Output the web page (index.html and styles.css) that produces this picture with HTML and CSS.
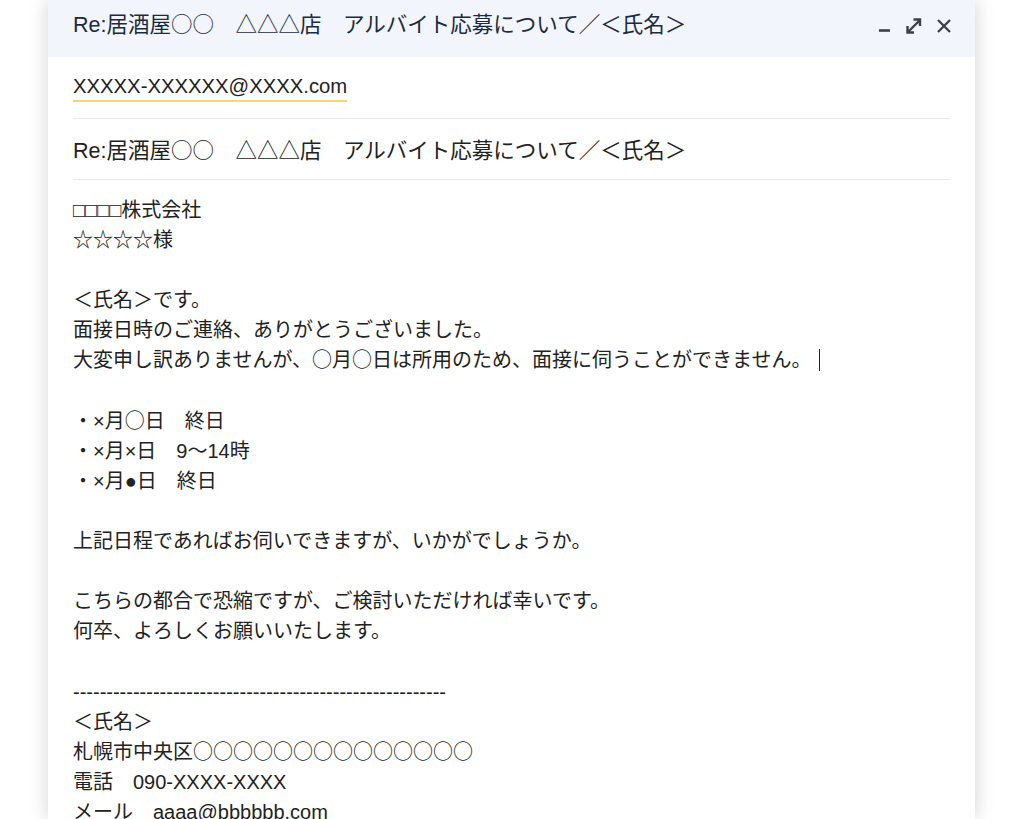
FILE: index.html
```html
<!DOCTYPE html>
<html lang="ja">
<head>
    <meta charset="UTF-8">
    <meta name="viewport" content="width=device-width, initial-scale=1.0">
    <title>Re:居酒屋〇〇　△△△店　アルバイト応募について／＜氏名＞</title>
    <link rel="stylesheet" href="styles.css">
</head>
<body>
    <div class="compose">
        <div class="titlebar">
            <div class="title">Re:居酒屋<span class="jp">○○</span>　<span class="jp">△△△</span>店　アルバイト応募について／＜氏名＞</div>
            <div class="controls">
                <svg width="14" height="14" viewBox="0 0 14 14"><path d="M1 11.5h11" stroke="#3c4043" stroke-width="2.6"/></svg>
                <svg width="20" height="18" viewBox="0 0 20 18"><path d="M3.5 15.5l12-12M3.5 9v6.5H10M9.5 2.5h6.5V9" stroke="#3c4043" stroke-width="2.4" fill="none"/></svg>
                <svg width="16" height="16" viewBox="0 0 16 16"><path d="M2 2l12 12M14 2L2 14" stroke="#3c4043" stroke-width="2.3"/></svg>
            </div>
        </div>

        <div class="field">
            <span class="recipient">XXXXX-XXXXXX@XXXX.com</span>
        </div>
        <div class="field subject">Re:居酒屋<span class="jp">○○</span>　<span class="jp">△△△</span>店　アルバイト応募について／＜氏名＞</div>

        <div class="body">
            <p>□□□□株式会社<br>☆☆☆☆様</p>
            <p>＜氏名＞です。<br>面接日時のご連絡、ありがとうございました。<br>大変申し訳ありませんが、<span class="jp">○</span>月<span class="jp">○</span>日は所用のため、面接に伺うことができません。<span class="caret"></span></p>
            <p>・×月<span class="jp">○</span>日　終日<br>・×月×日　9～14時<br>・×月●日　終日</p>
            <p>上記日程であればお伺いできますが、いかがでしょうか。</p>
            <p>こちらの都合で恐縮ですが、ご検討いただければ幸いです。<br>何卒、よろしくお願いいたします。</p>
            <p>--------------------------------------------------------<br>＜氏名＞<br>札幌市中央区<span class="jp">○○○○○○○○○○○○○○</span><br>電話　090-XXXX-XXXX<br>メール　aaaa@bbbbbb.com</p>
        </div>
    </div>
</body>
</html>
```

FILE: styles.css
```css
body {
    margin: 0;
    background: #fff;
    font-family: "Liberation Sans", "Noto Sans CJK JP", sans-serif;
    color: #222;
    overflow: hidden;
}

.jp {
    font-family: "Noto Sans CJK JP", sans-serif;
    line-height: 1;
}

.compose {
    width: 927px;
    margin-left: 48px;
    height: 819px;
    background: #fff;
    box-shadow: 0 0 18px rgba(0, 0, 0, 0.18);
}

.titlebar {
    height: 57px;
    background: #f2f6fc;
    display: flex;
    align-items: center;
    justify-content: space-between;
    padding: 0 23px 0 25px;
}

.title {
    font-size: 21.5px;
    color: #1c2a3d;
    margin-top: -12px;
}

.controls {
    display: flex;
    align-items: center;
    gap: 12px;
    margin-top: -6px;
}

.field {
    margin: 0 25px;
    height: 61px;
    display: flex;
    align-items: center;
    border-bottom: 1px solid #e9e9e9;
    font-size: 21.5px;
}

.recipient {
    font-size: 20.3px;
    padding-bottom: 2px;
    border-bottom: 2px solid #f5d872;
    margin-top: 2px;
}

.subject {
    margin-top: -1px;
}

.body {
    padding: 15px 25px 0;
    font-size: 20px;
    line-height: 30.1px;
}

.body p {
    margin: 0 0 30.1px;
}

.caret {
    display: inline-block;
    width: 1px;
    height: 22px;
    background: #222;
    margin-left: 8px;
    vertical-align: -4px;
}
```
